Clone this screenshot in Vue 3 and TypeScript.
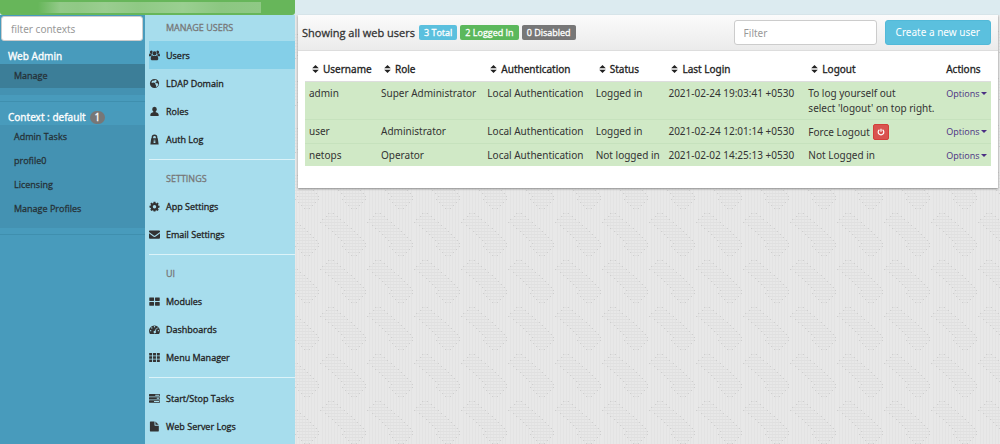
<script setup lang="ts">
import { ref, computed } from 'vue'

interface MenuItem { label: string; icon: string; active?: boolean }
interface MenuGroup { title?: string; items: MenuItem[] }
interface User {
  name: string; role: string; auth: string; status: string
  login: string; logout: string[]; force?: boolean
}

const groups: MenuGroup[] = [
  { title: 'MANAGE USERS', items: [
    { label: 'Users', icon: 'users', active: true },
    { label: 'LDAP Domain', icon: 'globe' },
    { label: 'Roles', icon: 'role' },
    { label: 'Auth Log', icon: 'lock' },
  ] },
  { title: 'SETTINGS', items: [
    { label: 'App Settings', icon: 'cog' },
    { label: 'Email Settings', icon: 'mail' },
  ] },
  { title: 'UI', items: [
    { label: 'Modules', icon: 'modules' },
    { label: 'Dashboards', icon: 'dash' },
    { label: 'Menu Manager', icon: 'grid' },
  ] },
  { items: [
    { label: 'Start/Stop Tasks', icon: 'tasks' },
    { label: 'Web Server Logs', icon: 'file' },
  ] },
]

const icons: Record<string, string> = {
  users: 'M2.500 .6a1.800 1.800 0 1 0 .8 3.500A3 3 0 0 1 4 1.500 1.800 1.800 0 0 0 2.500.6zM9.500.6A1.800 1.800 0 0 0 8 1.500a3 3 0 0 1 .7 2.600A1.800 1.800 0 1 0 9.500.6zM6 1.300a2.300 2.300 0 1 0 0 4.600 2.300 2.300 0 0 0 0-4.600zM1 3.900C.2 4 0 5 0 6.900h1.900c.3-.7.9-1 1.500-1.100L3 4.800C2.300 5 1.700 4.300 1 3.900zM11 3.900c-.7.4-1.300 1.100-2 .9l-.4 1c.6.1 1.200.4 1.500 1.100H12c0-1.900-.2-2.900-1-3zM3.900 5.900C2.400 5.900 1.900 7.500 1.900 9.500c0 1 .6 1.700 1.600 1.700h5c1 0 1.600-.7 1.600-1.700 0-2-.5-3.600-2-3.600-1.400 1-2.800 1-4.200 0z',
  globe: 'M6 1a5 5 0 1 0 0 10A5 5 0 0 0 6 1zm.3 1c.8 0 1.600.3 2.200.8l-.8.4.7.5-.6.9-1 .3.500 1 1.500-.4 1 .7.300.9c-.2 1.200-.9 2.100-1.900 2.600l-.7-.8.200-1.500-1.200-.7.100-1.300-.9-.3L4.400 5l-1 .5-.8-.9A4 4 0 0 1 5 2.100l-.4.9 1 .3z',
  role: 'M6 .8a2.600 2.600 0 0 1 2.500 2.700c0 1-.5 2-1.200 2.500v.8c1.500.3 3.200 1 3.200 2.600V11h-9V9.400c0-1.600 1.700-2.300 3.200-2.600V6a3 3 0 0 1-1.200-2.500A2.600 2.600 0 0 1 6 .8z',
  lock: 'M6 .5a3.100 3.100 0 0 0-3.100 3.100v1.100H2.400L1.500 11.500h9l-.9-6.800h-.5V3.600A3.100 3.100 0 0 0 6 .5zM4.500 4.700V3.600a1.500 1.500 0 0 1 3 0v1.100zM5 6.200h2v.8H5zm0 1.700h2v2H5z',
  cog: 'M5 .8h2l.3 1.500.6.3 1.300-.9 1.400 1.400-.9 1.300.3.6 1.500.3v1.900l-1.500.3-.3.700.9 1.300-1.400 1.400-1.300-.9-.6.300-.3 1.200H5l-.3-1.200-.6-.3-1.300.9-1.400-1.400.9-1.300-.3-.7L.500 7.200V5.300L2 5l.3-.6-.9-1.300 1.400-1.400 1.300.9.6-.3zm1 3.600a1.900 1.900 0 1 0 0 3.800 1.900 1.900 0 0 0 0-3.800z',
  mail: 'M0 2.500C0 2 .4 1.500 1 1.500h10c.6 0 1 .4 1 1v.8L6.700 7.100q-.7.5-1.400 0L0 3.300zm0 2.200 4.600 3.400q1.400 1 2.800 0L12 4.700v4.800c0 .6-.4 1-1 1H1c-.6 0-1-.4-1-1z',
  modules: 'M.8 1.500h4.200q.5 0 .5.500v3q0 .5-.5.500H.8Q.3 5.500.3 5V2q0-.5.500-.5zm6.300 0h4.100q.5 0 .5.500v3q0 .5-.5.500H7.100q-.5 0-.5-.5V2q0-.5.500-.5zM.8 6.500h4.200q.5 0 .5.500v3q0 .5-.5.500H.8Q.3 10.500.3 10V7q0-.5.500-.5zm6.300 0h4.100q.5 0 .5.500v3q0 .5-.5.500H7.100q-.5 0-.5-.5V7q0-.5.500-.5z',
  dash: 'M6 1.500a6 6 0 0 0-5.100 9l.4.3h9.400l.4-.3A6 6 0 0 0 6 1.500zM6 2.300a.7.7 0 1 1 0 1.500.7.7 0 0 1 0-1.500zm-3 1.200a.7.7 0 1 1 0 1.500.7.7 0 0 1 0-1.500zm4.800.8.700.3-1.300 3.200a1.300 1.300 0 1 1-.8-.3zM1.800 6.500a.7.7 0 1 1 0 1.500.7.7 0 0 1 0-1.500zm8.400 0a.7.7 0 1 1 0 1.500.7.7 0 0 1 0-1.500zM9.500 3.700a.6.6 0 1 1 0 1.200.6.6 0 0 1 0-1.200z',
  grid: 'M.2 1h3.200v2.700H.2zm4.200 0h3.200v2.700H4.400zm4.200 0h3.200v2.700H8.600zM.2 4.600h3.200v2.700H.2zm4.200 0h3.200v2.700H4.400zm4.200 0h3.200v2.700H8.600zM.2 8.200h3.200v2.700H.2zm4.200 0h3.200v2.700H4.400zm4.200 0h3.200v2.700H8.600z',
  tasks: 'M.5 1h11q.5 0 .5.500v1.700q0 .5-.5.500H.5Q0 3.700 0 3.200V1.500Q0 1 .5 1zm6.300.8v1.100h4.400V1.800zM.5 4.500h11q.5 0 .5.500v1.700q0 .5-.5.500H.5Q0 7.200 0 6.700V5q0-.5.500-.5zm8 .8v1.100h2.700V5.300zM.5 8h11q.5 0 .5.500v1.700q0 .5-.5.500H.5q-.5 0-.5-.5V8.500Q0 8 .5 8zm5 .8v1.100h5.700V8.800z',
  file: 'M1.500.5H6v4.200q0 .5.500.5h4.200v5.800q0 .5-.5.500H1.500q-.5 0-.5-.5V1q0-.5.500-.5zM7 .6l3.600 3.600H7z',
}

const contexts = ['Admin Tasks', 'profile0', 'Licensing', 'Manage Profiles']
const columns = ['Username', 'Role', 'Authentication', 'Status', 'Last Login', 'Logout']

const users: User[] = [
  { name: 'admin', role: 'Super Administrator', auth: 'Local Authentication', status: 'Logged in', login: '2021-02-24 19:03:41 +0530', logout: ['To log yourself out', "select 'logout' on top right."] },
  { name: 'user', role: 'Administrator', auth: 'Local Authentication', status: 'Logged in', login: '2021-02-24 12:01:14 +0530', logout: ['Force Logout'], force: true },
  { name: 'netops', role: 'Operator', auth: 'Local Authentication', status: 'Not logged in', login: '2021-02-02 14:25:13 +0530', logout: ['Not Logged in'] },
]

const filter = ref('')
const contextFilter = ref('')
const shown = computed(() => users.filter(u => u.name.includes(filter.value.toLowerCase())))

// Start and end of each horizontal stripe in the 47px background tile
const stripes = [
  [8, 14], [6, 18], [2, 21], [0, 25], [5, 28], [8, 32], [12, 35], [15, 38],
  [18, 41], [21, 44], [24, 46], [22, 46], [25, 43], [28, 40], [31, 37],
]
</script>

<template>
  <div class="page">
    <svg class="texture" aria-hidden="true">
      <defs>
        <pattern id="weave" width="47" height="47" patternUnits="userSpaceOnUse" patternTransform="translate(38 25)">
          <rect width="47" height="47" fill="#e8e8e8" />
          <rect v-for="n in 15" :key="'v' + n" :x="n * 3 - 1" y="0" width="1" height="47" fill="#e3e3e3" />
          <template v-for="(s, i) in stripes" :key="i">
            <rect :x="s[0]" :y="i * 3" :width="s[1] - s[0]" height="1" fill="#e0e0e0" />
            <rect :x="s[0]" :y="i * 3" width="1" height="1" fill="#cecece" />
            <rect :x="s[1] - 1" :y="i * 3" width="1" height="1" fill="#cecece" />
          </template>
        </pattern>
      </defs>
      <rect width="100%" height="100%" fill="url(#weave)" />
    </svg>

    <header class="topbar">
      <div class="brand"><div class="brand-mask"></div></div>
    </header>

    <div class="body">
      <aside class="contexts">
        <input v-model="contextFilter" class="field context-filter" type="text" placeholder="filter contexts" aria-label="filter contexts">
        <section class="context">
          <h2>Web Admin</h2>
          <div class="links"><a href="#manage" class="current">Manage</a></div>
        </section>
        <section class="context">
          <h2>Context : default <span class="count">1</span></h2>
          <div class="links"><a v-for="c in contexts" :key="c" href="#context">{{ c }}</a></div>
        </section>
      </aside>

      <nav class="menu">
        <div v-for="(g, gi) in groups" :key="gi" class="group">
          <h3 v-if="g.title">{{ g.title }}</h3>
          <a v-for="item in g.items" :key="item.label" href="#menu" :class="{ active: item.active }">
            <svg viewBox="0 0 12 12" aria-hidden="true"><path :d="icons[item.icon]" fill-rule="evenodd" /></svg>
            {{ item.label }}
          </a>
        </div>
      </nav>

      <main class="panel">
        <div class="panel-head">
          <h1>Showing all web users</h1>
          <span class="label total">3 Total</span>
          <span class="label logged">2 Logged In</span>
          <span class="label disabled">0 Disabled</span>
          <input v-model="filter" class="field user-filter" type="text" placeholder="Filter" aria-label="Filter">
          <button class="create" type="button">Create a new user</button>
        </div>
        <table>
          <colgroup>
            <col class="c-name"><col class="c-role"><col class="c-auth"><col class="c-status"><col class="c-login"><col class="c-logout"><col>
          </colgroup>
          <thead>
            <tr>
              <th v-for="c in columns" :key="c" scope="col">
                <svg class="sort" viewBox="0 0 7 8" aria-hidden="true"><path d="M3.500 0 6.800 3.300H.2zM.2 4.700h6.600L3.500 8z" /></svg>{{ c }}
              </th>
              <th scope="col" class="actions">Actions</th>
            </tr>
          </thead>
          <tbody>
            <tr v-for="u in shown" :key="u.name">
              <td>{{ u.name }}</td>
              <td>{{ u.role }}</td>
              <td>{{ u.auth }}</td>
              <td>{{ u.status }}</td>
              <td>{{ u.login }}</td>
              <td>
                <div v-for="line in u.logout" :key="line" class="line">
                  {{ line }}
                  <button v-if="u.force" class="power" type="button" aria-label="Force Logout">
                    <svg viewBox="0 0 10 10" aria-hidden="true"><path d="M3 2.200a3.500 3.500 0 1 0 4 0M5 .8v4" /></svg>
                  </button>
                </div>
              </td>
              <td><a class="options" href="#options">Options<span class="caret"></span></a></td>
            </tr>
          </tbody>
        </table>
      </main>
    </div>
  </div>
</template>

<style>
body { margin: 0; }
</style>

<style scoped>
* { box-sizing: border-box; }
.page {
  position: relative;
  display: flex;
  flex-direction: column;
  min-height: 100vh;
  font-family: "Noto Sans", "Open Sans", sans-serif;
  font-size: 10px;
  line-height: 15px;
  color: #333;
}
.texture { position: absolute; inset: 0; width: 100%; height: 100%; }
.topbar { position: relative; height: 15px; background: #dcebf0; }
.brand { width: 295px; height: 15px; padding: 2px 34px 2px 38px; background: #67b65a; border-radius: 0 0 3px 3px; }
.brand-mask { height: 11px; background: linear-gradient(90deg, #67b65a, #93ca89 10%, #90c985 18%, #9acd90 30%, #8fc984 45%, #9acf91 65%, #8cc781 82%, #8fc985); }
.body { position: relative; display: flex; flex: 1; }
h1, h2, h3 { margin: 0; font-weight: 400; }
a { text-decoration: none; }
.field {
  font: inherit;
  color: #555;
  background: #fff;
  border: 1px solid #ccc;
  border-radius: 3px;
  outline: 0;
}
.field::placeholder { color: #999; opacity: 1; }

.contexts { width: 145px; padding-top: 1px; background: #489bbc; }
.context-filter { display: block; width: 142px; height: 25px; margin: 0 1px 7px; padding: 0 9px; }
.context { padding-bottom: 6px; margin-bottom: 7px; border-bottom: 1px solid #3f8fae; }
.context h2 { display: flex; align-items: center; gap: 4px; height: 16px; padding-left: 8px; font-size: 10px; color: #fff; -webkit-text-stroke: .3px #fff; }
.count { padding: 0 5px; font-size: 10px; line-height: 13px; background: #777; border-radius: 7px; }
.links { display: flex; flex-direction: column; padding-bottom: 7px; background: #4492b2; }
.links a { padding-left: 14px; font-family: "Open Sans", sans-serif; font-size: 9px; line-height: 24px; color: #263238; -webkit-text-stroke: .3px #263238; }
.links a.current { background: #3c7e98; }

.menu { width: 150px; padding-left: 4px; font-family: "Open Sans", sans-serif; font-size: 9px; background: #a7dded; }
.group { padding-bottom: 6px; border-bottom: 1px solid #dcf3f9; }
.group + .group { padding-top: 6px; }
.group:last-child { border-bottom: 0; }
.group h3 { padding-left: 17px; font-size: 9px; line-height: 26px; color: #777; -webkit-text-stroke: .3px #777; }
.group a { display: flex; align-items: center; gap: 6px; height: 28px; color: #222; -webkit-text-stroke: .3px #222; }
.group a.active { background: #84cfe8; }
.group svg { width: 11px; height: 11px; fill: #333; stroke: none; }

.panel {
  flex: 1;
  align-self: flex-start;
  min-width: 0;
  margin: 0 2px 0 3px;
  padding-bottom: 22px;
  background: #fff;
  box-shadow: 0 1px 2px #888;
}
.panel-head {
  display: flex;
  align-items: center;
  gap: 3px;
  height: 36px;
  padding: 0 7px 0 4px;
  background: linear-gradient(#fbfbfb, #ebebeb);
  border-bottom: 1px solid #ddd;
}
.panel-head h1 { font-family: "Open Sans", sans-serif; font-size: 11px; -webkit-text-stroke: .3px #333; white-space: nowrap; }
.label { padding: 0 5px; font-family: "Open Sans", sans-serif; font-size: 9px; line-height: 15px; color: #fff; -webkit-text-stroke: .3px #fff; border-radius: 2px; white-space: nowrap; }
.total { margin-left: 1px; background: #5bc0de; }
.logged { background: #5cb85c; }
.disabled { background: #777; }
.user-filter { width: 143px; height: 25px; margin-left: auto; padding: 0 9px; }
.create { height: 25px; margin-left: 5px; padding: 0 10px; font: inherit; color: #fff; background: #5bc0de; border: 1px solid #52b9d8; border-radius: 3px; white-space: nowrap; }

table { width: calc(100% - 14px); margin: 7px 7px 0 7px; border-collapse: collapse; table-layout: fixed; }
.c-name { width: 10.5%; }
.c-role { width: 15.5%; }
.c-auth { width: 15.8%; }
.c-status { width: 10.6%; }
.c-login { width: 20.4%; }
.c-logout { width: 20.1%; }
th { padding: 4px 0 4px 7px; text-align: left; font-weight: 400; color: #222; -webkit-text-stroke: .3px #222; border-bottom: 1px solid #ddd; white-space: nowrap; }
th.actions { padding-left: 4px; }
.sort { width: 7px; height: 8px; margin-right: 4px; fill: #222; stroke: none; }
td { padding: 4px 0 3px 4px; vertical-align: top; background: #d0e9c6; border-top: 1px solid #c6e2bd; white-space: nowrap; }
.line { display: flex; align-items: center; gap: 3px; }
.power { display: grid; place-items: center; width: 16px; height: 16px; padding: 0; background: #d9534f; border: 1px solid #d43f3a; border-radius: 2px; }
.power svg { width: 8px; height: 8px; fill: none; stroke: #fff; stroke-width: 1.500; }
.options { display: flex; align-items: center; gap: 2px; font-family: "Open Sans", sans-serif; font-size: 9px; color: #4b2e83; }
.caret { border-top: 3px solid #4b2e83; border-left: 3px solid transparent; border-right: 3px solid transparent; }
</style>
